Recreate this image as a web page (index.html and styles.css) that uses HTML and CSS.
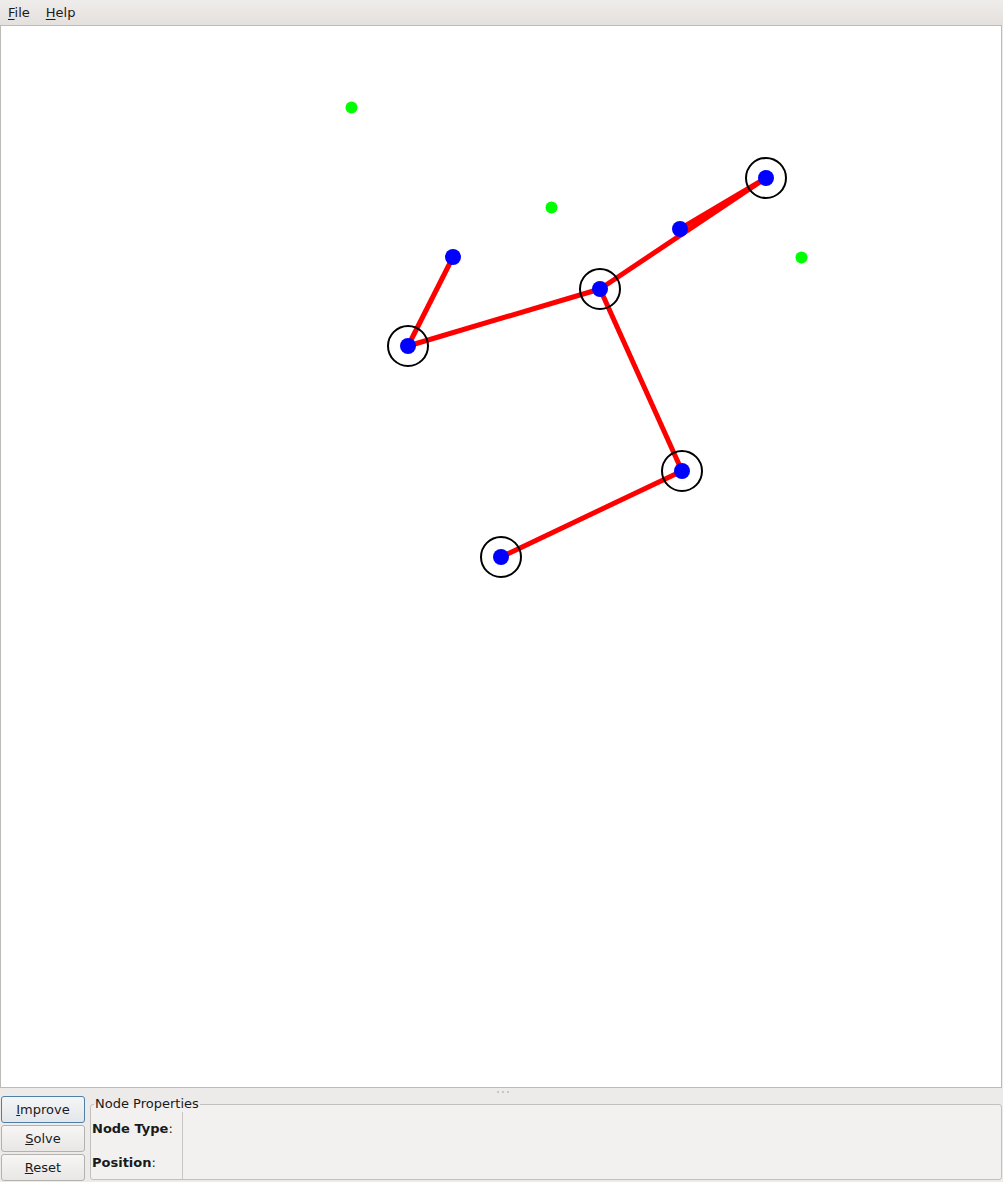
FILE: index.html
```html
<!DOCTYPE html>
<html>
<head>
<meta charset="utf-8">
<link rel="stylesheet" href="styles.css">
</head>
<body>
<div class="menubar">
  <span class="menu"><u>F</u>ile</span>
  <span class="menu"><u>H</u>elp</span>
</div>
<div class="canvas">
  <svg class="graph" width="1000" height="1061" viewBox="1 26 1000 1061">
    <g stroke="#ff0000" stroke-width="5" stroke-linecap="butt">
      <line x1="453" y1="257" x2="408" y2="346"/>
      <line x1="408" y1="346" x2="600" y2="289"/>
      <line x1="600" y1="289" x2="766" y2="178"/>
      <line x1="680" y1="229" x2="766" y2="178"/>
      <line x1="600" y1="289" x2="682" y2="471"/>
      <line x1="682" y1="471" x2="501" y2="557"/>
    </g>
    <g fill="none" stroke="#000" stroke-width="2">
      <circle cx="408" cy="346" r="20"/>
      <circle cx="600" cy="289" r="20"/>
      <circle cx="766" cy="178" r="20"/>
      <circle cx="682" cy="471" r="20"/>
      <circle cx="501" cy="557" r="20"/>
    </g>
    <g fill="#0000ff">
      <circle cx="453" cy="257" r="8"/>
      <circle cx="408" cy="346" r="8"/>
      <circle cx="600" cy="289" r="8"/>
      <circle cx="766" cy="178" r="8"/>
      <circle cx="680" cy="229" r="8"/>
      <circle cx="682" cy="471" r="8"/>
      <circle cx="501" cy="557" r="8"/>
    </g>
    <g fill="#00ff00">
      <circle cx="351.5" cy="107.5" r="6"/>
      <circle cx="551.5" cy="207.5" r="6"/>
      <circle cx="801.5" cy="257.5" r="6"/>
    </g>
  </svg>
</div>
<div class="splitter"><span class="dot"></span><span class="dot"></span><span class="dot"></span></div>
<div class="bottom">
  <div class="buttons">
    <button class="btn default"><u>I</u>mprove</button>
    <button class="btn"><u>S</u>olve</button>
    <button class="btn"><u>R</u>eset</button>
  </div>
  <div class="group">
    <div class="group-title">Node Properties</div>
    <div class="group-body">
      <div class="labels">
        <div class="label"><b>Node Type</b>:</div>
        <div class="label"><b>Position</b>:</div>
      </div>
      <div class="values"></div>
    </div>
  </div>
</div>
</body>
</html>
```

FILE: styles.css
```css
html, body {
  margin: 0;
  padding: 0;
}
body {
  width: 1003px;
  height: 1182px;
  background: #edebe9;
  font-family: "DejaVu Sans", sans-serif;
  font-size: 13px;
  color: #1a1a1a;
  overflow: hidden;
}
.menubar {
  height: 25px;
  background: linear-gradient(#efedeb, #e3e0dd);
  display: flex;
  align-items: center;
  padding-left: 8px;
  gap: 16px;
  box-sizing: border-box;
}
.menu u {
  text-decoration: underline;
  text-underline-offset: 2px;
}
.canvas {
  width: 1000px;
  height: 1061px;
  background: #fff;
  border: 1px solid #bdbbb8;
  margin: 0;
}
.graph {
  display: block;
}
.splitter {
  height: 8px;
  display: flex;
  justify-content: center;
  align-items: center;
  gap: 3px;
  padding-left: 2px;
}
.dot {
  width: 2px;
  height: 2px;
  background: #c9c7c4;
}
.bottom {
  display: flex;
  padding-left: 1px;
  height: 86px;
}
.buttons {
  display: flex;
  flex-direction: column;
  gap: 2px;
  width: 84px;
}
.btn {
  height: 27px;
  width: 84px;
  border: 1px solid #b5b2ae;
  border-radius: 3px;
  background: linear-gradient(#f7f6f5, #e9e7e5);
  font-family: "DejaVu Sans", sans-serif;
  font-size: 13px;
  color: #1a1a1a;
  padding: 0;
}
.btn.default {
  border-color: #4f7fa6;
  background: linear-gradient(#f4f5f6, #e4e7ea);
}
.group {
  margin-left: 5px;
  flex: 1;
  margin-right: 1px;
  margin-top: 8px;
  border: 1px solid #c2c0bd;
  border-radius: 3px;
  background: #f2f1f0;
  position: relative;
  height: 76px;
  box-sizing: border-box;
}
.group-title {
  position: absolute;
  top: -9px;
  left: 3px;
  padding: 0 1px;
  background: linear-gradient(#edebe9 50%, #f2f1f0 50%);
  line-height: 16px;
}
.group-body {
  display: flex;
  height: 100%;
  padding-top: 7px;
  box-sizing: border-box;
}
.labels {
  width: 90px;
  border-right: 1px solid #c8c6c3;
  display: flex;
  flex-direction: column;
  padding-left: 1px;
}
.label {
  height: 17px;
  line-height: 17px;
  margin-top: 8px;
}
.label + .label {
  margin-top: 17px;
}
```
